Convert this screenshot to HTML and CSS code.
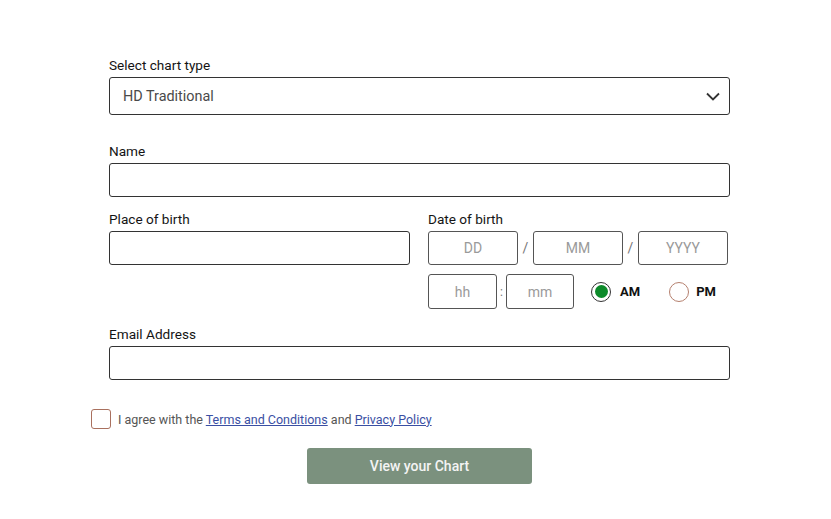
FILE: index.html
```html
<!DOCTYPE html>
<html lang="en">
<head>
<meta charset="utf-8">
<title>Chart form</title>
<link rel="stylesheet" href="styles.css">
</head>
<body>
<form class="form">
  <div class="field">
    <label class="label">Select chart type</label>
    <div class="select">
      <span class="select-value">HD Traditional</span>
      <svg class="chevron" width="14" height="9" viewBox="0 0 14 9"><path d="M1 1.5 L7 7.5 L13 1.5" fill="none" stroke="#333" stroke-width="1.8"/></svg>
    </div>
  </div>

  <div class="field field-name">
    <label class="label">Name</label>
    <input class="input" type="text">
  </div>

  <div class="grid">
    <div class="field">
      <label class="label">Place of birth</label>
      <input class="input" type="text">
    </div>
    <div class="field">
      <label class="label">Date of birth</label>
      <div class="date-row">
        <input class="box" type="text" placeholder="DD">
        <span class="sep">/</span>
        <input class="box" type="text" placeholder="MM">
        <span class="sep">/</span>
        <input class="box" type="text" placeholder="YYYY">
      </div>
      <div class="time-row">
        <input class="box box-h" type="text" placeholder="hh">
        <span class="sep sep-colon">:</span>
        <input class="box box-m" type="text" placeholder="mm">
        <span class="radio radio-on"><span class="dot"></span></span>
        <span class="radio-label">AM</span>
        <span class="radio radio-off"></span>
        <span class="radio-label radio-label-pm">PM</span>
      </div>
    </div>
  </div>

  <div class="field field-email">
    <label class="label">Email Address</label>
    <input class="input" type="text">
  </div>

  <div class="agree">
    <span class="checkbox"></span>
    <span class="agree-text">I agree with the <a href="#">Terms and Conditions</a> and <a href="#">Privacy Policy</a></span>
  </div>

  <div class="actions">
    <button type="button" class="btn">View your Chart</button>
  </div>
</form>
</body>
</html>
```

FILE: styles.css
```css
* { box-sizing: border-box; }
html, body { margin: 0; padding: 0; background: #fff; }
body {
  font-family: Roboto, "Liberation Sans", Arial, sans-serif;
  font-size: 14px;
  color: #222;
}
.form {
  width: 621px;
  margin-left: 109px;
  padding-top: 57px;
}
.field { display: flex; flex-direction: column; }
.label {
  display: block;
  font-size: 13.6px;
  line-height: 17px;
  color: #141414;
  margin-bottom: 3px;
}
.select {
  height: 38px;
  border: 1px solid #333;
  border-radius: 3px;
  display: flex;
  align-items: center;
  justify-content: space-between;
  padding: 0 9px 0 13px;
}
.select-value { color: #4a4a4a; font-size: 14.4px; }
.chevron { display: block; margin-top: 1px; }
.field-name { margin-top: 28px; }
.input {
  display: block;
  width: 100%;
  height: 34px;
  border: 1px solid #333;
  border-radius: 3px;
  font: inherit;
  padding: 0 10px;
  background: #fff;
  margin: 0;
}
.grid {
  display: grid;
  grid-template-columns: 301px 302px;
  column-gap: 18px;
  margin-top: 14px;
}
.date-row, .time-row { display: flex; align-items: center; }
.box {
  height: 34px;
  width: 90px;
  border: 1px solid #555;
  border-radius: 3px;
  font: inherit;
  font-size: 14px;
  text-align: center;
  padding: 0;
  margin: 0;
  background: #fff;
}
.box::placeholder { color: #9a9a9a; }
.sep {
  width: 15px;
  text-align: center;
  color: #777;
  font-size: 14px;
}
.time-row { margin-top: 9px; }
.box-h { width: 69px; height: 35px; }
.box-m { width: 68px; height: 35px; }
.sep-colon { width: 9px; font-size: 12px; }
.radio {
  width: 20px;
  height: 20px;
  border-radius: 50%;
  display: flex;
  align-items: center;
  justify-content: center;
}
.radio-on { border: 1.5px solid #333; margin-left: 17px; }
.radio-on .dot {
  width: 13px; height: 13px; border-radius: 50%;
  background: #0d8a2a;
}
.radio-off { border: 1px solid #b5806e; margin-left: 29px; }
.radio-label {
  font-size: 13px;
  font-weight: 700;
  color: #111;
  margin-left: 9px;
}
.radio-label-pm { margin-left: 7px; }
.field-email { margin-top: 17px; }
.agree {
  display: flex;
  align-items: center;
  margin-left: -18px;
  margin-top: 29px;
}
.checkbox {
  width: 20px; height: 20px;
  border: 1px solid #a9705e;
  border-radius: 3px;
}
.agree-text {
  margin-left: 7px;
  font-size: 12.5px;
  color: #555;
}
.agree-text a { color: #3a4fa3; text-decoration: underline; }
.actions { display: flex; justify-content: center; margin-top: 19px; }
.btn {
  width: 225px;
  height: 36px;
  border: none;
  border-radius: 3px;
  background: #7b917e;
  color: #f4f4f4;
  font-family: Roboto, "Liberation Sans", Arial, sans-serif;
  font-size: 14px;
  font-weight: 500;
  cursor: pointer;
}
```
